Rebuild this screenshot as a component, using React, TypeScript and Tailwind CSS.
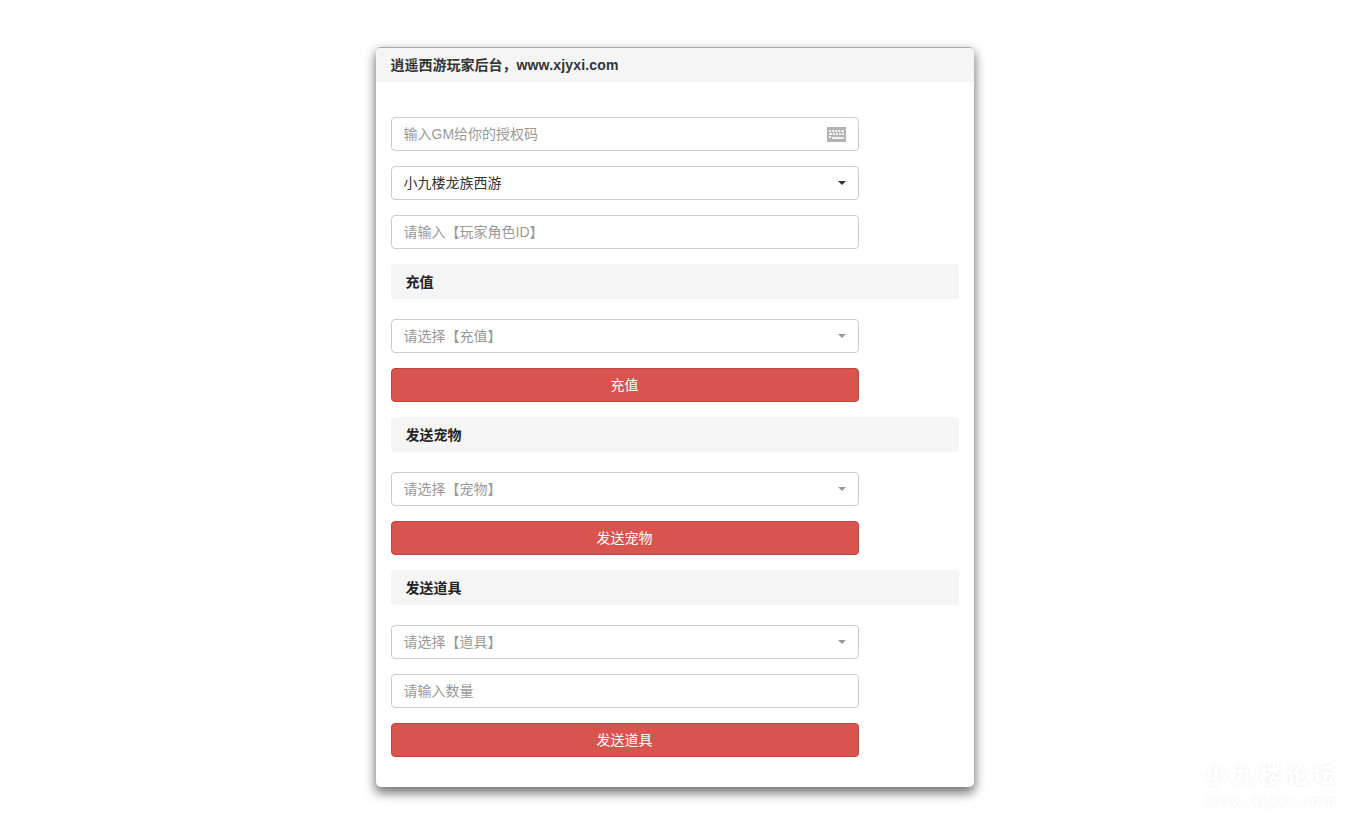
const fieldClass =
  'block w-[468px] h-[34px] rounded-[4px] border border-[#ccc] bg-white px-3 text-[14px] text-[#333] outline-none placeholder:text-[#999]';

function Field({ placeholder, children }: { placeholder: string; children?: React.ReactNode }) {
  return (
    <div className="relative w-[468px] mb-[15px]">
      <input className={fieldClass} placeholder={placeholder} />
      {children}
    </div>
  );
}

function Select({ label, active }: { label: string; active?: boolean }) {
  return (
    <div className="flex items-center justify-between w-[468px] h-[34px] mb-[15px] rounded-[4px] border border-[#ccc] bg-white pl-3 pr-[12px] text-[14px]">
      <span className={active ? 'text-[#333]' : 'text-[#999]'}>{label}</span>
      <span
        className={`w-0 h-0 border-x-[4px] border-x-transparent border-t-[4px] ${
          active ? 'border-t-[#333]' : 'border-t-[#999]'
        }`}
      />
    </div>
  );
}

function SectionTitle({ title }: { title: string }) {
  return (
    <div className="flex items-center h-[35px] pt-[2px] mb-[20px] rounded-[4px] bg-[#f5f5f5] px-[15px] text-[14px] font-bold text-[#222]">
      {title}
    </div>
  );
}

function SubmitButton({ label }: { label: string }) {
  return (
    <button className="block w-[468px] h-[34px] mb-[15px] rounded-[4px] border border-[#bd4743] bg-[#d9534f] text-[14px] text-white">
      {label}
    </button>
  );
}

function KeyboardIcon() {
  return (
    <svg
      className="absolute right-[13px] top-[10px]"
      width="19"
      height="15"
      viewBox="0 0 19 15"
    >
      <rect width="19" height="15" fill="#b3b3b3" />
      <g fill="#f2f2f2">
        <rect x="2" y="3" width="2" height="2" />
        <rect x="5" y="3" width="2" height="2" />
        <rect x="8" y="3" width="2" height="2" />
        <rect x="11" y="3" width="2" height="2" />
        <rect x="14" y="3" width="3" height="2" />
        <rect x="2" y="6" width="3" height="2" />
        <rect x="6" y="6" width="2" height="2" />
        <rect x="9" y="6" width="2" height="2" />
        <rect x="12" y="6" width="2" height="2" />
        <rect x="15" y="6" width="2" height="2" />
        <rect x="2" y="9" width="2" height="2" />
        <rect x="5" y="10" width="12" height="2" />
      </g>
    </svg>
  );
}

export default function App() {
  return (
    <div className="relative min-h-[818px] overflow-hidden bg-white pt-[47px] font-['Liberation_Sans','Noto_Sans_CJK_SC',sans-serif]">
      <div className="mx-auto w-[598px] h-[740px] rounded-[5px] border-t border-[#aaa] bg-white shadow-[0_5px_11px_1px_rgba(0,0,0,0.55)]">
        {/* Header */}
        <div className="flex items-center h-[34px] rounded-t-[4px] bg-[#f5f5f5] px-[15px] text-[14px] font-bold text-[#333]">
          逍遥西游玩家后台，<span className="tracking-[0.17px]">www.xjyxi.com</span>
        </div>

        <div className="px-[15px] pt-[35px]">
          <Field placeholder="输入GM给你的授权码">
            <KeyboardIcon />
          </Field>
          <Select label="小九楼龙族西游" active />
          <Field placeholder="请输入【玩家角色ID】" />

          <SectionTitle title="充值" />
          <Select label="请选择【充值】" />
          <SubmitButton label="充值" />

          <SectionTitle title="发送宠物" />
          <Select label="请选择【宠物】" />
          <SubmitButton label="发送宠物" />

          <SectionTitle title="发送道具" />
          <Select label="请选择【道具】" />
          <Field placeholder="请输入数量" />
          <SubmitButton label="发送道具" />
        </div>
      </div>

      {/* Watermark */}
      <div className="absolute left-[1205px] top-[765px] w-[132px] font-bold leading-none text-white [text-shadow:0_0_4px_rgba(0,0,0,0.08)]">
        <div className="text-[22px] tracking-[5px] whitespace-nowrap">小九楼论坛</div>
        <div className="mt-[7px] text-[14px] tracking-[2.5px] whitespace-nowrap">www.xjyxi.com</div>
      </div>
    </div>
  );
}
